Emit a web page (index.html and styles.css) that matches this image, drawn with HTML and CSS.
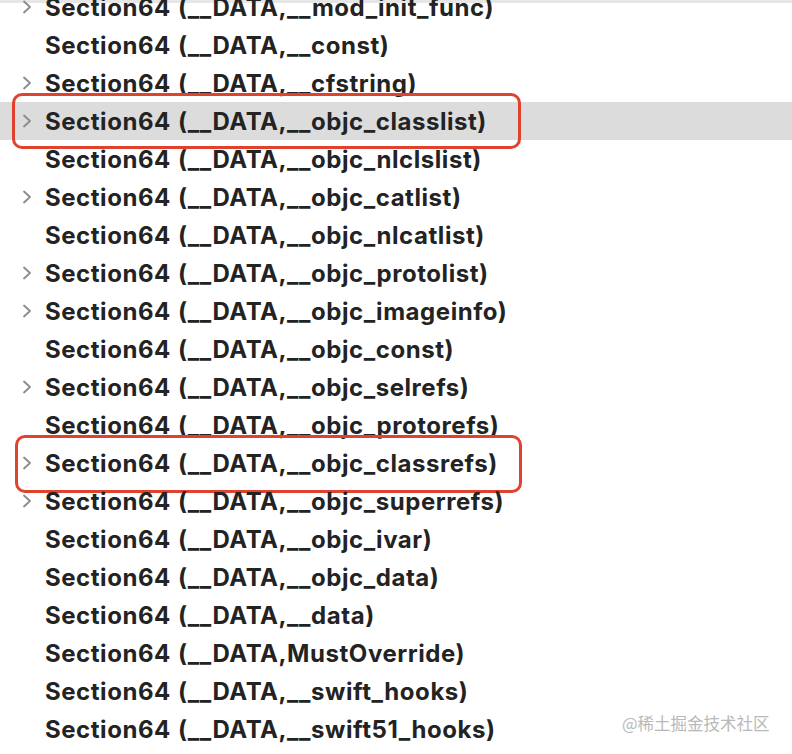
FILE: index.html
```html
<!DOCTYPE html>
<html>
<head>
<meta charset="utf-8">
<link rel="stylesheet" href="styles.css">
</head>
<body>
<div class="topstrip"></div>
<ul class="list">
  <li class="row"><span class="chev"><svg viewBox="0 0 10 14" width="10" height="14"><path d="M2 1.5 L8 7 L2 12.5" /></svg></span><span class="label">Section64 (__DATA,__mod_init_func)</span></li>
  <li class="row"><span class="chev"></span><span class="label">Section64 (__DATA,__const)</span></li>
  <li class="row"><span class="chev"><svg viewBox="0 0 10 14" width="10" height="14"><path d="M2 1.5 L8 7 L2 12.5" /></svg></span><span class="label">Section64 (__DATA,__cfstring)</span></li>
  <li class="row selected"><span class="chev"><svg viewBox="0 0 10 14" width="10" height="14"><path d="M2 1.5 L8 7 L2 12.5" /></svg></span><span class="label">Section64 (__DATA,__objc_classlist)</span><span class="mark mark-a"></span></li>
  <li class="row"><span class="chev"></span><span class="label">Section64 (__DATA,__objc_nlclslist)</span></li>
  <li class="row"><span class="chev"><svg viewBox="0 0 10 14" width="10" height="14"><path d="M2 1.5 L8 7 L2 12.5" /></svg></span><span class="label">Section64 (__DATA,__objc_catlist)</span></li>
  <li class="row"><span class="chev"></span><span class="label">Section64 (__DATA,__objc_nlcatlist)</span></li>
  <li class="row"><span class="chev"><svg viewBox="0 0 10 14" width="10" height="14"><path d="M2 1.5 L8 7 L2 12.5" /></svg></span><span class="label">Section64 (__DATA,__objc_protolist)</span></li>
  <li class="row"><span class="chev"><svg viewBox="0 0 10 14" width="10" height="14"><path d="M2 1.5 L8 7 L2 12.5" /></svg></span><span class="label">Section64 (__DATA,__objc_imageinfo)</span></li>
  <li class="row"><span class="chev"></span><span class="label">Section64 (__DATA,__objc_const)</span></li>
  <li class="row"><span class="chev"><svg viewBox="0 0 10 14" width="10" height="14"><path d="M2 1.5 L8 7 L2 12.5" /></svg></span><span class="label">Section64 (__DATA,__objc_selrefs)</span></li>
  <li class="row"><span class="chev"></span><span class="label">Section64 (__DATA,__objc_protorefs)</span></li>
  <li class="row"><span class="chev"><svg viewBox="0 0 10 14" width="10" height="14"><path d="M2 1.5 L8 7 L2 12.5" /></svg></span><span class="label">Section64 (__DATA,__objc_classrefs)</span><span class="mark mark-b"></span></li>
  <li class="row"><span class="chev"><svg viewBox="0 0 10 14" width="10" height="14"><path d="M2 1.5 L8 7 L2 12.5" /></svg></span><span class="label">Section64 (__DATA,__objc_superrefs)</span></li>
  <li class="row"><span class="chev"></span><span class="label">Section64 (__DATA,__objc_ivar)</span></li>
  <li class="row"><span class="chev"></span><span class="label">Section64 (__DATA,__objc_data)</span></li>
  <li class="row"><span class="chev"></span><span class="label">Section64 (__DATA,__data)</span></li>
  <li class="row"><span class="chev"></span><span class="label">Section64 (__DATA,MustOverride)</span></li>
  <li class="row"><span class="chev"></span><span class="label">Section64 (__DATA,__swift_hooks)</span></li>
  <li class="row"><span class="chev"></span><span class="label">Section64 (__DATA,__swift51_hooks)</span></li>
</ul>
<div class="watermark">@稀土掘金技术社区</div>
</body>
</html>
```

FILE: styles.css
```css
html, body {
  margin: 0;
  padding: 0;
  background: #ffffff;
  width: 792px;
  height: 754px;
  overflow: hidden;
  position: relative;
}
.topstrip {
  height: 3px;
  background: #e6e6e6;
}
.list {
  list-style: none;
  margin: -15px 0 0 0;
  padding: 0;
}
.row {
  position: relative;
  height: 38px;
  display: flex;
  align-items: center;
  font-family: Inter, "Liberation Sans", Arial, sans-serif;
  font-weight: bold;
  font-size: 24px;
  letter-spacing: 0.55px;
  word-spacing: 1px;
  color: #232323;
}
.row.selected {
  background: #dcdcdc;
}
.chev {
  width: 45px;
  flex: none;
  display: flex;
  justify-content: flex-start;
  padding-left: 22px;
  box-sizing: border-box;
}
.chev svg path {
  fill: none;
  stroke: #8a8a8a;
  stroke-width: 1.8;
  stroke-linecap: round;
  stroke-linejoin: round;
}
.label {
  white-space: nowrap;
}
.mark {
  position: absolute;
  border: 3.5px solid #e0432d;
  border-radius: 10px;
  box-sizing: border-box;
}
.mark-a {
  left: 12px;
  width: 509px;
  top: -9px;
  height: 56px;
}
.mark-b {
  left: 15px;
  width: 507px;
  top: -9px;
  height: 58px;
}
.watermark {
  position: absolute;
  left: 622px;
  top: 711px;
  font-family: "Noto Sans CJK SC", "Liberation Sans", sans-serif;
  font-size: 16.5px;
  color: #b9b9b9;
}
```
